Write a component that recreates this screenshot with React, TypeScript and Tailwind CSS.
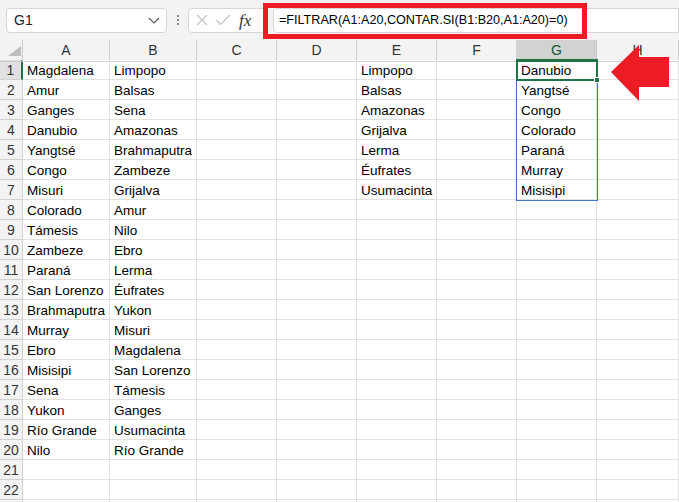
import React from "react";

const colA = ["Magdalena","Amur","Ganges","Danubio","Yangtsé","Congo","Misuri","Colorado","Támesis","Zambeze","Paraná","San Lorenzo","Brahmaputra","Murray","Ebro","Misisipi","Sena","Yukon","Río Grande","Nilo"];
const colB = ["Limpopo","Balsas","Sena","Amazonas","Brahmaputra","Zambeze","Grijalva","Amur","Nilo","Ebro","Lerma","Éufrates","Yukon","Misuri","Magdalena","San Lorenzo","Támesis","Ganges","Usumacinta","Río Grande"];
const colE = ["Limpopo","Balsas","Amazonas","Grijalva","Lerma","Éufrates","Usumacinta"];
const colG = ["Danubio","Yangtsé","Congo","Colorado","Paraná","Murray","Misisipi"];

const letters = ["A","B","C","D","E","F","G","H"];
const gridCols = "grid grid-cols-[23px_87px_87px_80px_80px_80px_80px_80px_1fr]";

function Cell({ text }: { text?: string }) {
  return (
    <div className="h-5 border-r border-b border-[#e1e1e1] pl-1 pt-[1px] leading-[19px] text-[13.5px] text-black whitespace-nowrap overflow-hidden">
      {text}
    </div>
  );
}

export default function App() {
  const rows = Array.from({ length: 23 }, (_, i) => i + 1);

  return (
    <div className="w-[679px] h-[502px] overflow-hidden bg-white font-['Liberation_Sans',sans-serif] select-none">
      {/* Formula bar */}
      <div className="h-10 bg-[#f3f3f3] flex items-center relative">
        <div className="ml-[6px] w-[161px] h-[25px] bg-white border border-[#d6d6d6] rounded-[4px] flex items-center justify-between pl-[7px] pr-[4px]">
          <span className="text-[14px] text-[#222]">G1</span>
          <svg width="16" height="16" viewBox="0 0 16 16" fill="none" stroke="#555" strokeWidth="1.1">
            <path d="M3 6l5 5 5-5" />
          </svg>
        </div>
        <div className="w-[21px] flex flex-col items-center gap-[2px]">
          <span className="w-[2px] h-[2px] bg-[#888]" />
          <span className="w-[2px] h-[2px] bg-[#888]" />
          <span className="w-[2px] h-[2px] bg-[#888]" />
        </div>
        <div className="w-[80px] h-[25px] bg-white border border-[#d6d6d6] rounded-[4px] flex items-center pl-[6px] gap-[6px]">
          <svg width="14" height="14" viewBox="0 0 14 14" fill="none" stroke="#c3c3c3" strokeWidth="1.2">
            <path d="M2 2l10 10M12 2L2 12" />
          </svg>
          <svg width="16" height="14" viewBox="0 0 16 14" fill="none" stroke="#c3c3c3" strokeWidth="1.2">
            <path d="M1 7l4.5 4.5L15 2" />
          </svg>
          <span className="font-['Liberation_Serif',serif] italic text-[17px] text-[#333] leading-none ml-[2px]">fx</span>
        </div>
        <div className="flex-1 h-[25px] bg-white border border-[#d6d6d6] rounded-l-[4px] ml-[5px] flex items-center pl-[5px]">
          <span className="text-[12.6px] text-black">=FILTRAR(A1:A20,CONTAR.SI(B1:B20,A1:A20)=0)</span>
        </div>
        <div className="absolute left-[263px] top-[3px] w-[324px] h-[36px] border-[5px] border-[#ed1c24]" />
      </div>

      {/* Sheet */}
      <div className="relative">
        <div className={`${gridCols} h-5 bg-[#f3f3f3]`}>
          <div className="relative border-r border-b border-[#c8c8c8]">
            <svg className="absolute left-[8px] top-[6px]" width="13" height="10" viewBox="0 0 13 10">
              <path d="M13 0L13 10L0 10Z" fill="#bdbdbd" />
            </svg>
          </div>
          {letters.map((l) =>
            l === "G" ? (
              <div key={l} className="bg-[#d2d2d2] border-r border-[#c8c8c8] border-b-2 border-b-[#217346] text-center text-[14px] leading-[19px] pt-[1px] text-[#0f5b30]">
                {l}
              </div>
            ) : (
              <div key={l} className="border-r border-b border-[#d0d0d0] text-center text-[14px] leading-[19px] pt-[1px] text-[#333]">
                {l}
              </div>
            )
          )}
        </div>
        {rows.map((r) => (
          <div key={r} className={gridCols}>
            <div
              className={
                r === 1
                  ? "h-5 bg-[#e1e1e1] border-b border-[#d0d0d0] border-r-2 border-r-[#217346] text-center text-[14px] leading-[19px] pt-[1px] text-[#333]"
                  : "h-5 bg-[#f3f3f3] border-r border-b border-[#d0d0d0] text-center text-[14px] leading-[19px] pt-[1px] text-[#333]"
              }
            >
              {r <= 22 ? r : ""}
            </div>
            <Cell text={colA[r - 1]} />
            <Cell text={colB[r - 1]} />
            <Cell />
            <Cell />
            <Cell text={colE[r - 1]} />
            <Cell />
            <Cell text={colG[r - 1]} />
            <Cell />
          </div>
        ))}

        {/* Spill range G1:G7 */}
        <div className="absolute left-[516px] top-[20px] w-[82px] h-[141px] border border-[#4472c4] pointer-events-none" />
        {/* Active cell G1 */}
        <div className="absolute left-[516px] top-[19px] w-[82px] h-[22px] border-2 border-[#217346] pointer-events-none" />
        <div className="absolute left-[594px] top-[37px] w-[6px] h-[6px] bg-[#217346] border border-white pointer-events-none" />

        {/* Red arrow */}
        <svg className="absolute left-[609px] top-[3px]" width="62" height="60" viewBox="0 0 62 60">
          <path d="M2 29L30 2L30 14L60 14L60 44L30 44L30 58Z" fill="#ed1c24" />
        </svg>
      </div>
    </div>
  );
}
